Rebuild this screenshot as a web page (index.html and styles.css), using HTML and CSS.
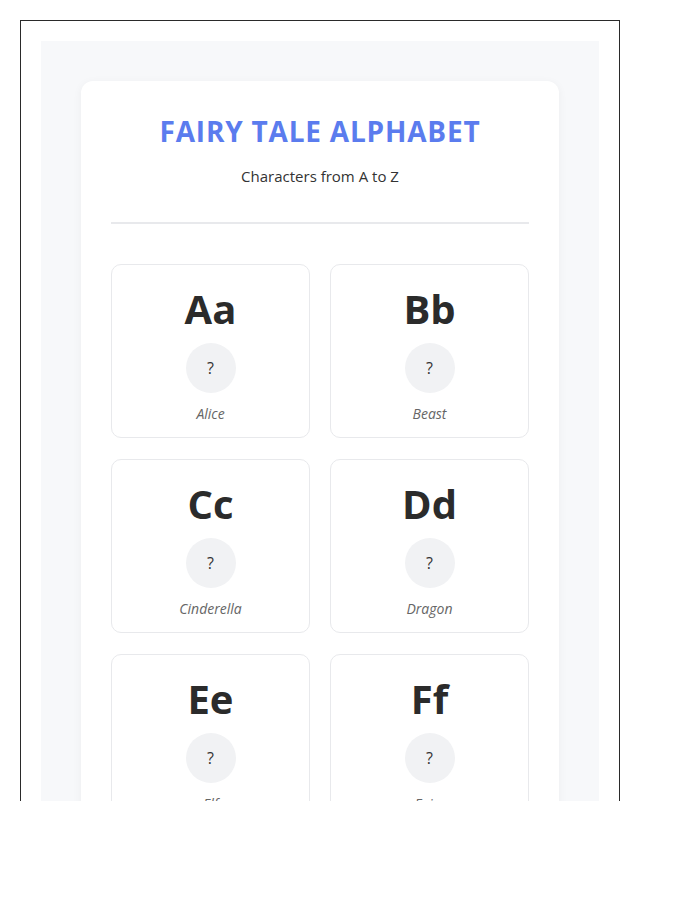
FILE: index.html
```html
<!DOCTYPE html>
<html lang="en">
<head>
<meta charset="utf-8">
<title>Fairy Tale Alphabet</title>
<link rel="stylesheet" href="styles.css">
</head>
<body>
<div class="frame">
  <div class="stage">
    <main class="sheet">
      <header class="head">
        <h1 class="title">FAIRY TALE ALPHABET</h1>
        <p class="subtitle">Characters from A to Z</p>
      </header>
      <section class="grid">
        <div class="tile"><div class="letter">Aa</div><div class="pic">?</div><div class="name">Alice</div></div>
        <div class="tile"><div class="letter">Bb</div><div class="pic">?</div><div class="name">Beast</div></div>
        <div class="tile"><div class="letter">Cc</div><div class="pic">?</div><div class="name">Cinderella</div></div>
        <div class="tile"><div class="letter">Dd</div><div class="pic">?</div><div class="name">Dragon</div></div>
        <div class="tile"><div class="letter">Ee</div><div class="pic">?</div><div class="name">Elf</div></div>
        <div class="tile"><div class="letter">Ff</div><div class="pic">?</div><div class="name">Fairy</div></div>
      </section>
    </main>
  </div>
</div>
</body>
</html>
```

FILE: styles.css
```css
* { box-sizing: border-box; }
html, body { margin: 0; padding: 0; background: #fff; }
body { padding: 20px; font-family: "Open Sans", "Noto Sans", sans-serif; color: #2b2b2b; }

.frame {
  width: 600px;
  height: 781px;
  border: 1px solid #2a2a2a;
  border-bottom: none;
  padding: 20px 20px 0 20px;
  overflow: hidden;
}
.stage {
  background: #f7f8fa;
  padding: 40px;
  min-height: 900px;
}
.sheet {
  background: #fff;
  border-radius: 12px;
  box-shadow: 0 2px 10px rgba(0,0,0,0.05);
  padding: 30px 30px 40px;
}
.head {
  text-align: center;
  border-bottom: 2px solid #e8e9ec;
  padding-bottom: 35px;
  margin-bottom: 40px;
}
.title {
  margin: 0;
  font-size: 28px;
  line-height: 40px;
  font-weight: 700;
  color: #5b7cee;
  letter-spacing: 0.8px;
}
.subtitle {
  margin: 14px 0 0;
  font-size: 15px;
  line-height: 22px;
  color: #333;
}
.grid {
  display: grid;
  grid-template-columns: 1fr 1fr;
  gap: 21px 20px;
}
.tile {
  border: 1px solid #e8e9ec;
  border-radius: 10px;
  padding: 20px 10px 13px;
  display: flex;
  flex-direction: column;
  align-items: center;
}
.letter {
  font-size: 40px;
  font-weight: 700;
  line-height: 48px;
  color: #2b2b2b;
}
.pic {
  width: 50px;
  height: 50px;
  border-radius: 50%;
  background: #f1f2f4;
  margin-top: 10px;
  display: flex;
  align-items: center;
  justify-content: center;
  font-size: 16px;
  color: #333;
}
.name {
  margin-top: 11px;
  font-size: 14px;
  line-height: 20px;
  font-style: italic;
  color: #666;
}
```
